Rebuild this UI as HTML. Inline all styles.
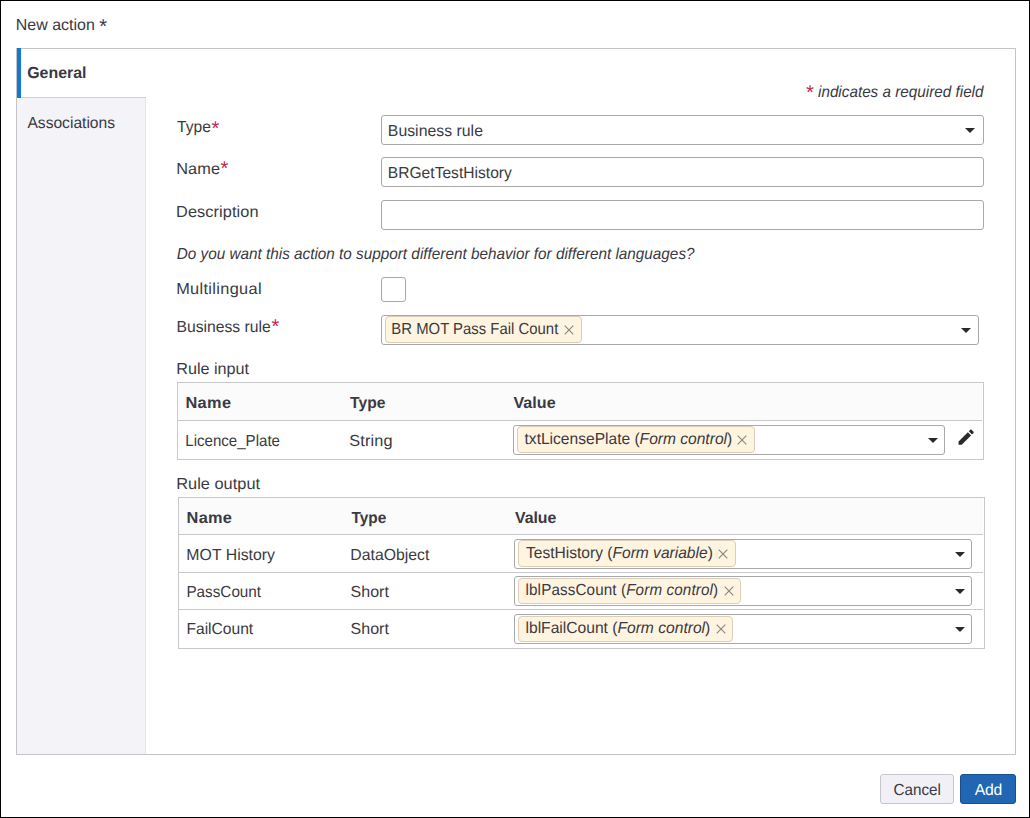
<!DOCTYPE html>
<html lang="en">
<head>
<meta charset="utf-8">
<title>New action</title>
<style>
*{box-sizing:border-box;margin:0;padding:0}
html,body{width:1030px;height:818px;overflow:hidden;background:#fff}
body{position:relative;font-family:"Liberation Sans",sans-serif;font-size:16px;color:#3a3a42;text-rendering:geometricPrecision}
.frame{position:absolute;left:0;top:0;width:1030px;height:818px;border:1px solid #000;pointer-events:none;z-index:10}
.t{position:absolute;white-space:pre;line-height:18px;height:18px;z-index:5;transform-origin:0 0}
.b{font-weight:bold}
.i{font-style:italic}
.a{font-size:20px}
.panel{position:absolute;left:16px;top:48px;width:1000px;height:707px;border:1px solid #c4c4c8;background:#fff}
.side{position:absolute;left:17px;top:49px;width:129px;height:705px;background:#f3f3f8;border-right:1px solid #e3e3e8}
.tabsel{position:absolute;left:17px;top:48px;width:129px;height:50px;background:#fff;border-left:4px solid #1279d3;border-bottom:1px solid #d2d2d6;border-top:1px solid #c4c4c8}
.bar{position:absolute;left:17px;top:48px;width:4px;height:50px;background:#1279d3}
.inp{position:absolute;border:1px solid #a9a9a9;border-radius:3px;background:#fff;height:30px}
.caret{position:absolute;width:10px;height:5px}
.tag{position:absolute;height:27px;border:1px solid #d9ceb9;border-radius:4px;background:#fff4e0}
.x{position:absolute;width:10px;height:10px}
.tbl{position:absolute;border:1px solid #c9c9cd;background:#fff}
.th{position:absolute;left:0;top:0;right:1px;background:#fbfbfb;border-bottom:1px solid #c9c9cd}
.hr{position:absolute;left:0;right:1px;height:1px;background:#c9c9cd}
.btn{position:absolute;height:30px;border-radius:3px;top:774px}
</style>
</head>
<body>
<div class="panel"></div>
<div class="side"></div>
<div class="tabsel"></div>
<div class="bar"></div>

<div class="inp" style="left:381px;top:115px;width:603px"></div>
<svg class="caret" style="left:965.4px;top:128.2px" viewBox="0 0 10 5"><polygon points="0,0 10,0 5,5" fill="#2a2a2a"/></svg>
<div class="inp" style="left:381px;top:157px;width:603px"></div>
<div class="inp" style="left:381px;top:200px;width:603px"></div>
<div class="inp" style="left:381px;top:277px;width:25px;height:25px"></div>

<div class="inp" style="left:381px;top:315px;width:598px"></div>
<div class="tag" style="left:385px;top:316px;width:197px"></div>
<svg class="x" style="left:563.8px;top:325.1px" viewBox="0 0 10 10"><path d="M0.7 0.7L9.3 9.3M9.3 0.7L0.7 9.3" stroke="#8b8882" stroke-width="1.15" fill="none"/></svg>
<svg class="caret" style="left:961.3px;top:328.1px" viewBox="0 0 10 5"><polygon points="0,0 10,0 5,5" fill="#2a2a2a"/></svg>

<div class="tbl" style="left:177px;top:382px;width:807px;height:78px"><div class="th" style="height:38px"></div></div>
<div class="inp" style="left:513px;top:425px;width:432px"></div>
<div class="tag" style="left:517px;top:426px;width:238px"></div>
<svg class="x" style="left:736.9px;top:435.1px" viewBox="0 0 10 10"><path d="M0.7 0.7L9.3 9.3M9.3 0.7L0.7 9.3" stroke="#8b8882" stroke-width="1.15" fill="none"/></svg>
<svg class="caret" style="left:927.55px;top:438.1px" viewBox="0 0 10 5"><polygon points="0,0 10,0 5,5" fill="#2a2a2a"/></svg>
<svg style="position:absolute;left:955.85px;top:427.25px;width:20.3px;height:20.3px" viewBox="0 0 24 24"><path fill="#2a2a2a" d="M3 17.25V21h3.75L17.81 9.94l-3.75-3.75L3 17.25zM20.71 7.04c.39-.39.39-1.02 0-1.41l-2.34-2.34c-.39-.39-1.02-.39-1.41 0l-1.83 1.83 3.75 3.75 1.83-1.83z"/></svg>

<div class="tbl" style="left:178px;top:497px;width:807px;height:152px"><div class="th" style="height:37px"></div><div class="hr" style="top:74px"></div><div class="hr" style="top:111px"></div></div>
<div class="inp" style="left:514px;top:539px;width:458px"></div>
<div class="tag" style="left:518px;top:540px;width:218px"></div>
<svg class="x" style="left:717.5px;top:549.3px" viewBox="0 0 10 10"><path d="M0.7 0.7L9.3 9.3M9.3 0.7L0.7 9.3" stroke="#8b8882" stroke-width="1.15" fill="none"/></svg>
<svg class="caret" style="left:954.9px;top:552.1px" viewBox="0 0 10 5"><polygon points="0,0 10,0 5,5" fill="#2a2a2a"/></svg>
<div class="inp" style="left:514px;top:576px;width:458px"></div>
<div class="tag" style="left:518px;top:578px;width:223px;height:26px"></div>
<svg class="x" style="left:723.5px;top:586.3px" viewBox="0 0 10 10"><path d="M0.7 0.7L9.3 9.3M9.3 0.7L0.7 9.3" stroke="#8b8882" stroke-width="1.15" fill="none"/></svg>
<svg class="caret" style="left:954.9px;top:589.1px" viewBox="0 0 10 5"><polygon points="0,0 10,0 5,5" fill="#2a2a2a"/></svg>
<div class="inp" style="left:514px;top:614px;width:458px"></div>
<div class="tag" style="left:518px;top:616px;width:215px;height:26px"></div>
<svg class="x" style="left:715.5px;top:624.2px" viewBox="0 0 10 10"><path d="M0.7 0.7L9.3 9.3M9.3 0.7L0.7 9.3" stroke="#8b8882" stroke-width="1.15" fill="none"/></svg>
<svg class="caret" style="left:954.9px;top:627.2px" viewBox="0 0 10 5"><polygon points="0,0 10,0 5,5" fill="#2a2a2a"/></svg>

<div class="btn" style="left:880px;width:74px;background:#f0f0f6;border:1px solid #c6c6ce"></div>
<div class="btn" style="left:960px;width:56px;background:#2166b3;border:1px solid #184f8f"></div>
<div class="t" style="left:15px;top:17px;padding-left:0.82px;transform:scaleX(0.998)">New action</div>
<div class="t a" style="left:99px;top:18.00px;padding-left:0.34px">*</div>
<div class="t b" style="left:27px;top:65px;padding-left:0.16px;transform:scaleX(0.994);letter-spacing:0.014px">General</div>
<div class="t" style="left:27px;top:115px;padding-left:0.45px;transform:scaleX(0.976);letter-spacing:-0.006px">Associations</div>
<div class="t i" style="left:818px;top:84px;padding-left:0.00px;transform:scaleX(0.953);letter-spacing:0.009px">indicates a required field</div>
<div class="t a i" style="left:805px;top:84.00px;padding-left:0.32px;color:#c4284f">*</div>
<div class="t" style="left:177px;top:119px;padding-left:0.05px;transform:scaleX(0.976);letter-spacing:0.037px">Type</div>
<div class="t a" style="left:211px;top:120.00px;padding-left:0.48px;color:#c4284f">*</div>
<div class="t" style="left:387px;top:123px;padding-left:0.85px;transform:scaleX(0.988);letter-spacing:0.016px">Business rule</div>
<div class="t" style="left:176px;top:161px;padding-left:0.20px;transform:scaleX(1.020);letter-spacing:0.121px">Name</div>
<div class="t a" style="left:220px;top:160.00px;padding-left:0.55px;color:#c4284f">*</div>
<div class="t" style="left:387px;top:165px;padding-left:0.87px;transform:scaleX(0.973);letter-spacing:0.017px">BRGetTestHistory</div>
<div class="t" style="left:176px;top:204px;padding-left:0.07px;transform:scaleX(1.020);letter-spacing:0.086px">Description</div>
<div class="t i" style="left:176px;top:246px;padding-left:0.74px;transform:scaleX(0.956)">Do you want this action to support different behavior for different languages?</div>
<div class="t" style="left:176px;top:281px;padding-left:0.20px;transform:scaleX(1.020);letter-spacing:0.330px">Multilingual</div>
<div class="t" style="left:176px;top:319px;padding-left:0.46px;transform:scaleX(0.980);letter-spacing:0.010px">Business rule</div>
<div class="t a" style="left:271px;top:318.00px;padding-left:0.39px;color:#c4284f">*</div>
<div class="t" style="left:391px;top:321px;padding-left:0.35px;transform:scaleX(0.930);letter-spacing:0.010px">BR MOT Pass Fail Count</div>
<div class="t" style="left:176px;top:361px;padding-left:0.26px;transform:scaleX(1.011);letter-spacing:-0.021px">Rule input</div>
<div class="t b" style="left:185px;top:395px;padding-left:0.43px;transform:scaleX(1.020);letter-spacing:0.352px">Name</div>
<div class="t b" style="left:350px;top:395px;padding-left:0.08px;transform:scaleX(0.976);letter-spacing:0.056px">Type</div>
<div class="t b" style="left:513px;top:395px;padding-left:0.48px;transform:scaleX(1.005);letter-spacing:0.040px">Value</div>
<div class="t" style="left:185px;top:433px;padding-left:0.29px;transform:scaleX(0.941);letter-spacing:0.009px">Licence_Plate</div>
<div class="t" style="left:349px;top:433px;padding-left:0.20px;transform:scaleX(1.020);letter-spacing:0.145px">String</div>
<div class="t" style="left:524px;top:431px;padding-left:0.56px;transform:scaleX(0.973)">txtLicensePlate (<span class="i">Form control</span>)</div>
<div class="t" style="left:176px;top:476px;padding-left:0.22px;transform:scaleX(1.020);letter-spacing:0.033px">Rule output</div>
<div class="t b" style="left:186px;top:510px;padding-left:0.60px;transform:scaleX(1.020);letter-spacing:0.286px">Name</div>
<div class="t b" style="left:351px;top:510px;padding-left:0.41px;transform:scaleX(0.962);letter-spacing:0.079px">Type</div>
<div class="t b" style="left:514px;top:510px;padding-left:0.99px;transform:scaleX(0.990);letter-spacing:-0.006px">Value</div>
<div class="t" style="left:186px;top:547px;padding-left:0.38px;transform:scaleX(0.989);letter-spacing:0.015px">MOT History</div>
<div class="t" style="left:350px;top:547px;padding-left:0.31px;transform:scaleX(0.986);letter-spacing:0.014px">DataObject</div>
<div class="t" style="left:525px;top:545px;padding-left:0.99px;transform:scaleX(0.973)">TestHistory (<span class="i">Form variable</span>)</div>
<div class="t" style="left:186px;top:584px;padding-left:0.47px;transform:scaleX(0.953);letter-spacing:0.005px">PassCount</div>
<div class="t" style="left:350px;top:584px;padding-left:0.57px;letter-spacing:0.006px">Short</div>
<div class="t" style="left:525px;top:582px;padding-left:0.57px;transform:scaleX(0.950);letter-spacing:0.136px">lblPassCount (<span class="i">Form control</span>)</div>
<div class="t" style="left:186px;top:621px;padding-left:0.46px;transform:scaleX(0.975)">FailCount</div>
<div class="t" style="left:350px;top:621px;padding-left:0.57px;letter-spacing:0.006px">Short</div>
<div class="t" style="left:525px;top:620px;padding-left:0.51px;transform:scaleX(0.977);letter-spacing:-0.010px">lblFailCount (<span class="i">Form control</span>)</div>
<div class="t" style="left:893px;top:782px;padding-left:0.64px;transform:scaleX(0.952);letter-spacing:-0.019px">Cancel</div>
<div class="t" style="left:974px;top:782px;padding-left:0.67px;transform:scaleX(0.983);letter-spacing:-0.156px;color:#fff">Add</div>
<div class="frame"></div>
</body>
</html>
